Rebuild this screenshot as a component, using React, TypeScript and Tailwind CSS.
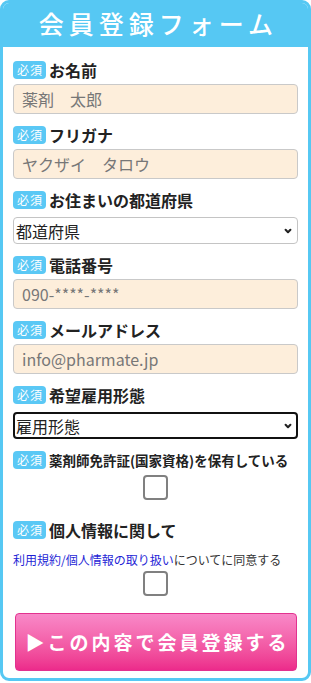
import React from "react";

const jp = { fontFamily: '"Noto Sans CJK JP", "Noto Sans", sans-serif' };

const Badge = () => (
  <span className="mr-[3px] flex h-[18px] w-[33px] shrink-0 items-center justify-center rounded-[4px] bg-[#5ac8f5] pl-[1px] text-[12px] leading-none tracking-[1px] text-white">
    必須
  </span>
);

const Label = ({ children, small }: { children: React.ReactNode; small?: boolean }) => (
  <div className="flex h-[20px] items-center">
    <Badge />
    <span
      className={
        small
          ? "whitespace-nowrap text-[13.5px] font-bold text-[#222]"
          : "text-[16px] font-bold text-[#222]"
      }
    >
      {children}
    </span>
  </div>
);

const TextField = ({ placeholder }: { placeholder: string }) => (
  <input
    type="text"
    placeholder={placeholder}
    className="mt-[4px] block h-[30px] w-full rounded-[4px] border border-[#c9c9c9] bg-[#fdeedb] px-[8px] text-[16px] text-[#222] outline-none placeholder:text-[#777]"
  />
);

const Chevron = () => (
  <svg
    className="pointer-events-none absolute right-[6px] top-1/2 h-[8px] w-[8px] -translate-y-1/2"
    viewBox="0 0 10 10"
    fill="none"
    stroke="#222"
    strokeWidth="2.6"
    strokeLinecap="round"
    strokeLinejoin="round"
  >
    <path d="M2 3.5 L5 6.5 L8 3.5" />
  </svg>
);

const SelectField = ({ label, focused }: { label: string; focused?: boolean }) => (
  <div className="relative mt-[7px] h-[27px]">
    <select
      className={
        focused
          ? "block h-full w-full appearance-none rounded-[4px] border-2 border-[#111] bg-white pl-[1px] text-[16px] text-[#222] outline-none"
          : "block h-full w-full appearance-none rounded-[4px] border border-[#c4c4c4] bg-white pl-[2px] text-[16px] text-[#222] outline-none"
      }
      defaultValue=""
    >
      <option value="">{label}</option>
    </select>
    <Chevron />
  </div>
);

const Check = () => (
  <div className="flex justify-center">
    <input
      type="checkbox"
      className="h-[25px] w-[25px] appearance-none rounded-[4px] border-2 border-[#808080] bg-white"
    />
  </div>
);

const App = () => {
  return (
    <div className="min-h-[683px] bg-white" style={jp}>
      <div className="overflow-hidden rounded-[9px] border-[3px] border-[#56c8f3] bg-white">
        {/* ヘッダー */}
        <div className="flex h-[44px] items-center justify-center bg-[#56c8f3] pb-[2px] pl-[6px] text-[25px] font-medium tracking-[5px] text-white">
          会員登録フォーム
        </div>

        <div className="px-[10px] pb-[7px] pt-[13px]">
          <div className="mb-[11px]">
            <Label>お名前</Label>
            <TextField placeholder="薬剤　太郎" />
          </div>
          <div className="mb-[11px]">
            <Label>フリガナ</Label>
            <TextField placeholder="ヤクザイ　タロウ" />
          </div>
          <div className="mb-[11px]">
            <Label>お住まいの都道府県</Label>
            <SelectField label="都道府県" />
          </div>
          <div className="mb-[11px]">
            <Label>電話番号</Label>
            <TextField placeholder="090-****-****" />
          </div>
          <div className="mb-[11px]">
            <Label>メールアドレス</Label>
            <TextField placeholder="info@pharmate.jp" />
          </div>
          <div className="mb-[11px]">
            <Label>希望雇用形態</Label>
            <SelectField label="雇用形態" focused />
          </div>
          <div className="mb-[20px]">
            <Label small>薬剤師免許証(国家資格)を保有している</Label>
            <div className="mt-[5px]">
              <Check />
            </div>
          </div>
          <div>
            <Label>個人情報に関して</Label>
            <p className="mt-[11px] h-[18px] whitespace-nowrap text-[12px] leading-[18px] text-[#333]">
              <a href="#" className="text-[#1f1fd6]">
                利用規約/個人情報の取り扱い
              </a>
              についてに同意する
            </p>
            <div className="mt-[2px]">
              <Check />
            </div>
          </div>

          <button
            type="button"
            className="mx-[2px] mt-[17px] flex h-[58px] w-[282px] items-center justify-center rounded-[4px] border border-[#e2328f] bg-gradient-to-b from-[#f888c8] to-[#ec2a8b] pl-[3px] text-[19px] font-bold tracking-[3px] text-white"
          >
            ▶この内容で会員登録する
          </button>
        </div>
      </div>
    </div>
  );
};

export default App;
